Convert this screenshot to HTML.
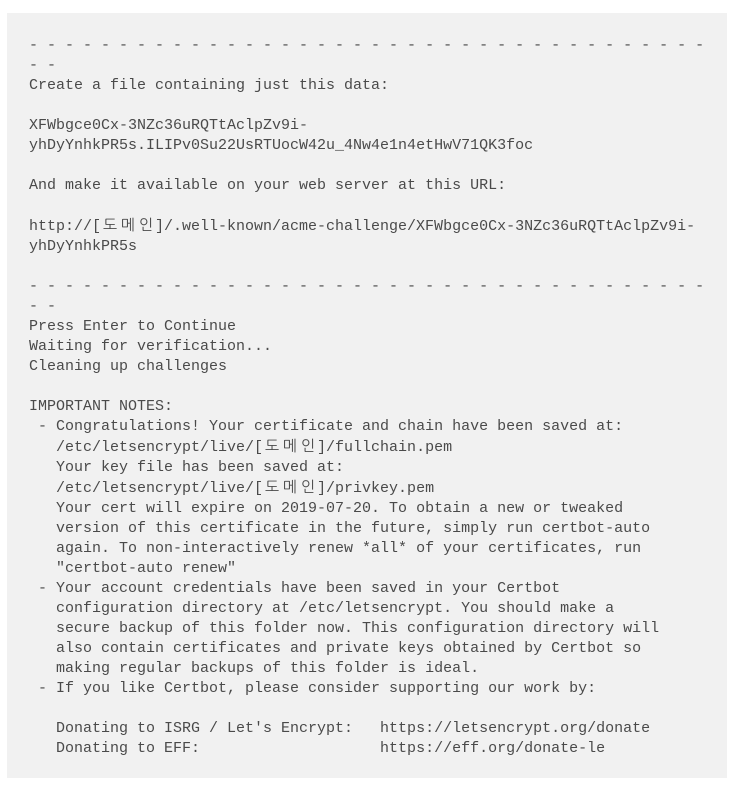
<!DOCTYPE html>
<html><head><meta charset="utf-8"><style>
html,body{margin:0;padding:0;background:#fff;}
.box{position:absolute;left:7px;top:13px;width:720px;height:765px;background:#f1f1f1;}
pre{position:absolute;left:22px;top:23px;margin:0;font-family:"Liberation Mono","NanumGothic",monospace;font-size:15px;line-height:20px;color:#4a4a4a;white-space:pre;}
.k{display:inline-block;width:18px;text-align:center;font-family:"NanumGothic","Noto Sans CJK KR",sans-serif;}
</style></head><body>
<div class="box"><pre>- - - - - - - - - - - - - - - - - - - - - - - - - - - - - - - - - - - - - -
- -
Create a file containing just this data:

XFWbgce0Cx-3NZc36uRQTtAclpZv9i-
yhDyYnhkPR5s.ILIPv0Su22UsRTUocW42u_4Nw4e1n4etHwV71QK3foc

And make it available on your web server at this URL:

http://[<span class="k">도</span><span class="k">메</span><span class="k">인</span>]/.well-known/acme-challenge/XFWbgce0Cx-3NZc36uRQTtAclpZv9i-
yhDyYnhkPR5s

- - - - - - - - - - - - - - - - - - - - - - - - - - - - - - - - - - - - - -
- -
Press Enter to Continue
Waiting for verification...
Cleaning up challenges

IMPORTANT NOTES:
 - Congratulations! Your certificate and chain have been saved at:
   /etc/letsencrypt/live/[<span class="k">도</span><span class="k">메</span><span class="k">인</span>]/fullchain.pem
   Your key file has been saved at:
   /etc/letsencrypt/live/[<span class="k">도</span><span class="k">메</span><span class="k">인</span>]/privkey.pem
   Your cert will expire on 2019-07-20. To obtain a new or tweaked
   version of this certificate in the future, simply run certbot-auto
   again. To non-interactively renew *all* of your certificates, run
   "certbot-auto renew"
 - Your account credentials have been saved in your Certbot
   configuration directory at /etc/letsencrypt. You should make a
   secure backup of this folder now. This configuration directory will
   also contain certificates and private keys obtained by Certbot so
   making regular backups of this folder is ideal.
 - If you like Certbot, please consider supporting our work by:

   Donating to ISRG / Let's Encrypt:   https://letsencrypt.org/donate
   Donating to EFF:                    https://eff.org/donate-le</pre></div>
</body></html>
